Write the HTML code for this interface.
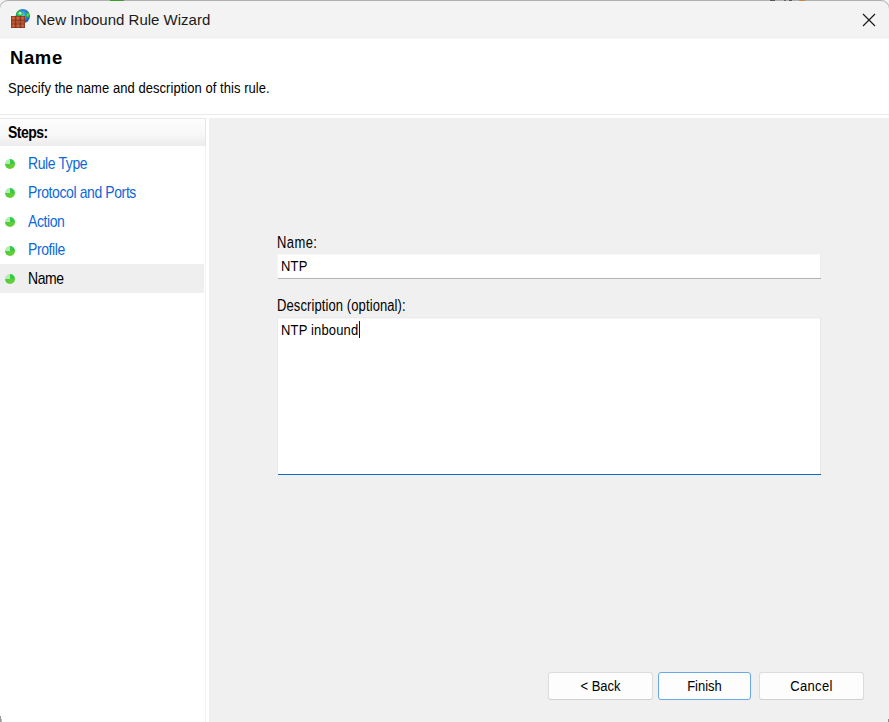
<!DOCTYPE html>
<html><head><meta charset="utf-8">
<style>
html,body{margin:0;padding:0;width:889px;height:722px;overflow:hidden;background:#f3f3f3;}
body{position:relative;font-family:"Liberation Sans",sans-serif;color:#000;}
.a{position:absolute;white-space:nowrap;}
#win{position:absolute;left:-1px;top:0;width:891px;height:740px;border:1px solid #b0b0b0;border-radius:9px 9px 0 0;box-sizing:border-box;background:#f3f3f3;}
#hdr{position:absolute;left:0;top:39px;width:889px;height:75px;background:#fff;}
#sep{position:absolute;left:0;top:114px;width:889px;height:1px;background:#ebebeb;}
#gap{position:absolute;left:0;top:115px;width:889px;height:3px;background:#fff;}
#left{position:absolute;left:0;top:118px;width:205px;height:604px;background:#fff;border-top:1px solid #e8e8e8;border-right:1px solid #f3f3f3;}
#gapv{position:absolute;left:206px;top:115px;width:3px;height:607px;background:#fff;}
#right{position:absolute;left:209px;top:118px;width:680px;height:604px;background:#f0f0f0;}
#stephdr{position:absolute;left:0;top:119px;width:205px;height:27px;border-right:1px solid #e6e6e6;background:linear-gradient(#fefefe,#f7f7f7 60%,#ececec);}
#sel{position:absolute;left:0;top:264px;width:204px;height:29px;background:#efefef;}
.dot{position:absolute;left:5px;width:10px;height:10px;border-radius:50%;background:conic-gradient(#33cc44 0deg 90deg,#66cc33 90deg 200deg,#55cc38 200deg 270deg,#b2ecb2 270deg 360deg);}
.t13{position:absolute;white-space:nowrap;font-size:13px;line-height:18px;transform-origin:0 13px;}
.t14{position:absolute;white-space:nowrap;font-size:14px;line-height:20px;transform-origin:0 15px;}
.step{left:28px;letter-spacing:-0.4px;color:#0d68d8;transform:scaleY(1.15);}
.btn{position:absolute;top:672px;height:28px;box-sizing:border-box;border:1px solid #dcdcdc;border-bottom-color:#cfcfcf;border-radius:3px;background:#fdfdfd;}
.bt{position:absolute;left:0;right:0;top:5px;text-align:center;font-size:13px;line-height:18px;transform-origin:50% 13px;transform:scaleY(1.12);}
</style></head><body>
<div id="win"></div>
<!-- title icon -->
<svg class="a" style="left:8px;top:6px" width="26" height="24" viewBox="8 6 26 24">
  <defs>
    <radialGradient id="gb" cx="45%" cy="40%" r="65%"><stop offset="0" stop-color="#7fd0ff"/><stop offset="0.45" stop-color="#2a8be0"/><stop offset="1" stop-color="#1850a8"/></radialGradient>
    <radialGradient id="gg" cx="50%" cy="50%" r="50%"><stop offset="0" stop-color="#60ff50"/><stop offset="1" stop-color="#18b018"/></radialGradient>
    <clipPath id="gc"><circle cx="22.7" cy="16.2" r="7.2"/></clipPath>
  </defs>
  <circle cx="22.7" cy="16.2" r="7.2" fill="url(#gb)"/>
  <g clip-path="url(#gc)">
    <ellipse cx="19.4" cy="13.4" rx="3.4" ry="2.7" fill="url(#gg)" opacity="0.9"/>
    <ellipse cx="27.8" cy="15" rx="2" ry="2.6" fill="url(#gg)" opacity="0.9"/>
    <circle cx="20.3" cy="13.3" r="1.3" fill="#e8ffe8" opacity="0.85"/>
  </g>
  <rect x="11" y="16" width="14" height="12" fill="#7a3420"/>
  <g fill="#b85430">
    <rect x="11.5" y="16.5" width="3.8" height="3.4" rx="0.8"/><rect x="16.1" y="16.5" width="3.8" height="3.4" rx="0.8"/><rect x="20.7" y="16.5" width="3.8" height="3.4" rx="0.8"/>
    <rect x="11.5" y="20.4" width="3.8" height="3.4" rx="0.8"/><rect x="16.1" y="20.4" width="3.8" height="3.4" rx="0.8"/><rect x="20.7" y="20.4" width="3.8" height="3.4" rx="0.8"/>
    <rect x="11.5" y="24.3" width="3.8" height="3.2" rx="0.8"/><rect x="16.1" y="24.3" width="3.8" height="3.2" rx="0.8"/><rect x="20.7" y="24.3" width="3.8" height="3.2" rx="0.8"/>
  </g>
  <g fill="#e07a50" opacity="0.7">
    <circle cx="13.5" cy="17.8" r="0.9"/><circle cx="18.1" cy="17.8" r="0.9"/><circle cx="22.7" cy="17.8" r="0.9"/>
    <circle cx="13.5" cy="25.6" r="0.9"/><circle cx="18.1" cy="25.6" r="0.9"/><circle cx="22.7" cy="25.6" r="0.9"/>
  </g>
</svg>
<div class="a" style="left:0;top:0;width:889px;height:1px;"></div>
<div class="a" style="left:110px;top:0;width:14px;height:1px;background:#3c9a2c;"></div>
<div class="a" style="left:770px;top:0;width:5px;height:1px;background:#555;"></div>
<div class="a" style="left:784px;top:0;width:2px;height:1px;background:#666;"></div>
<div class="a" style="left:789px;top:0;width:3px;height:1px;background:#555;"></div>
<div class="a" style="left:799px;top:0;width:6px;height:1px;background:#c08a40;"></div>
<div class="a" style="left:36px;top:10px;font-size:15px;line-height:20px;letter-spacing:0px;color:#1a1a1a;">New Inbound Rule Wizard</div>
<!-- close X -->
<svg class="a" style="left:862px;top:13px" width="14" height="14" viewBox="0 0 14 14"><path d="M1 1L13 13M13 1L1 13" stroke="#1a1a1a" stroke-width="1.2"/></svg>

<div id="hdr"></div>
<div class="a" style="left:0;top:36px;width:889px;height:2px;background:#f0f0f0;"></div>
<div class="a" style="left:0;top:38px;width:889px;height:1px;background:#f8f8f8;"></div>
<div class="a" style="left:10px;top:47px;font-size:18.5px;line-height:22px;font-weight:bold;letter-spacing:0.6px;color:#000;">Name</div>
<div class="a" style="left:8px;top:80px;font-size:13px;line-height:18px;letter-spacing:0.05px;color:#000;transform-origin:0 13px;transform:scaleY(1.07);">Specify the name and description of this rule.</div>
<div id="sep"></div>
<div id="gap"></div>
<div id="left"></div>
<div id="gapv"></div>
<div id="right"></div>
<div id="stephdr"></div>
<div class="a" style="left:8px;top:124px;font-size:14px;line-height:18px;font-weight:bold;letter-spacing:-0.5px;transform-origin:0 14px;transform:scaleY(1.18);">Steps:</div>
<div id="sel"></div>

<div class="dot" style="top:159.2px"></div><div class="t14 step" style="top:154px">Rule Type</div>
<div class="dot" style="top:188px"></div><div class="t14 step" style="top:183px">Protocol and Ports</div>
<div class="dot" style="top:216.7px"></div><div class="t14 step" style="top:212px">Action</div>
<div class="dot" style="top:245.5px"></div><div class="t14 step" style="top:240px">Profile</div>
<div class="dot" style="top:274.3px"></div><div class="t14 step" style="top:269px;color:#000;">Name</div>

<div class="t13" style="left:277px;top:235px;letter-spacing:0.4px;transform:scaleY(1.22);">Name:</div>
<div class="a" style="left:277px;top:254px;width:1px;height:24px;background:#f4f4f4;"></div>
<div class="a" style="left:278px;top:254px;width:542px;height:1px;background:#f7f7f7;"></div>
<div class="a" style="left:278px;top:255px;width:542px;height:23px;background:#fff;border-right:1px solid #ececec;"></div>
<div class="a" style="left:278px;top:278px;width:543px;height:1px;background:#b3b3b3;"></div>
<div class="t13" style="left:281px;top:258px;letter-spacing:0.15px;transform:scaleY(1.12);">NTP</div>
<div class="t13" style="left:277px;top:298px;letter-spacing:0.1px;transform:scaleY(1.2);">Description (optional):</div>
<div class="a" style="left:277px;top:317px;width:544px;height:157px;background:#ebebeb;"></div>
<div class="a" style="left:278px;top:318px;width:542px;height:1px;background:#f8f8f8;"></div>
<div class="a" style="left:278px;top:319px;width:542px;height:155px;background:#fff;border-right:1px solid #e4e8ec;"></div>
<div class="a" style="left:278px;top:474px;width:543px;height:1px;background:#0b6bc3;"></div>
<div class="t13" style="left:281px;top:322px;letter-spacing:0.15px;transform:scaleY(1.12);">NTP inbound</div>
<div class="a" style="left:359px;top:321px;width:1px;height:17px;background:#1a1a1a;"></div>

<div class="btn" style="left:548px;width:105px;"><div class="bt">&lt; Back</div></div>
<div class="btn" style="left:658px;width:93px;border-color:#6aa8ea;"><div class="bt">Finish</div></div>
<div class="btn" style="left:759px;width:105px;"><div class="bt" style="letter-spacing:0.3px">Cancel</div></div>
<div class="a" style="left:0;top:716px;width:1px;height:6px;background:#9a9a9a;"></div>
<div class="a" style="left:1px;top:719px;width:1px;height:3px;background:#b8b8b8;"></div>
<div class="a" style="left:888px;top:719px;width:1px;height:3px;background:#8a8a8a;"></div>
</body></html>
